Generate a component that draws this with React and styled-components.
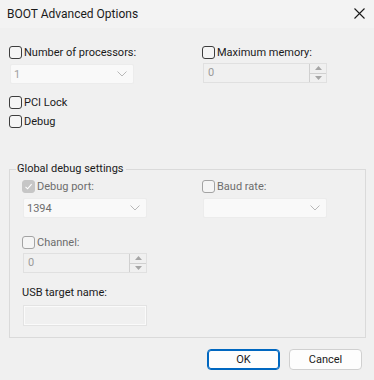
import React from 'react'
import styled, { createGlobalStyle } from 'styled-components'

const GlobalStyle = createGlobalStyle`
	html, body {
		margin: 0;
		padding: 0;
		background: #f0f0f0;
	}
	* {
		box-sizing: border-box;
	}
`

function Check({ label, checked, disabled, dim }) {
	return (
		<CheckRow>
			<CheckBox checked={checked} disabled={disabled}>
				{checked && (
					<svg width="9" height="9" viewBox="0 0 9 9">
						<path d="M1.5 4.8 L3.6 6.8 L7.6 2.2" fill="none" stroke="#fff" strokeWidth="1.1" />
					</svg>
				)}
			</CheckBox>
			<CheckLabel dim={dim}>{label}</CheckLabel>
		</CheckRow>
	)
}

function Combo({ value, dark }) {
	return (
		<ComboBox>
			<ComboValue dark={dark}>{value}</ComboValue>
			<svg width="10" height="6" viewBox="0 0 10 6">
				<path d="M0.5 0.5 L5 5 L9.5 0.5" fill="none" stroke="#b8b8b8" strokeWidth="1" />
			</svg>
		</ComboBox>
	)
}

function Spinner({ value }) {
	return (
		<SpinBox>
			<SpinValue>{value}</SpinValue>
			<SpinButtons>
				<SpinBtn>
					<svg width="7" height="4" viewBox="0 0 7 4">
						<path d="M0 4 L3.5 0 L7 4 Z" fill="#a6a6a6" />
					</svg>
				</SpinBtn>
				<SpinBtn>
					<svg width="7" height="4" viewBox="0 0 7 4">
						<path d="M0 0 L3.5 4 L7 0 Z" fill="#a6a6a6" />
					</svg>
				</SpinBtn>
			</SpinButtons>
		</SpinBox>
	)
}

export default function App() {
	return (
		<Dialog>
			<GlobalStyle />
			<TitleBar>
				<Title>BOOT Advanced Options</Title>
				<CloseBtn>
					<svg width="11" height="11" viewBox="0 0 11 11">
						<path d="M0.5 0.5 L10.5 10.5 M10.5 0.5 L0.5 10.5" stroke="#1a1a1a" strokeWidth="1.1" />
					</svg>
				</CloseBtn>
			</TitleBar>
			<Body>
				<TopGrid>
					<Column>
						<Check label="Number of processors:" />
						<Combo value="1" />
					</Column>
					<Column>
						<Check label="Maximum memory:" />
						<Spinner value="0" />
					</Column>
				</TopGrid>
				<Options>
					<Check label="PCI Lock" />
					<Check label="Debug" />
				</Options>
				<Group>
					<Legend>Global debug settings</Legend>
					<GroupGrid>
						<Column>
							<Check label="Debug port:" checked disabled dim />
							<Combo value="1394" dark />
						</Column>
						<Column>
							<Check label="Baud rate:" disabled dim />
							<Combo value="" />
						</Column>
						<Column>
							<Check label="Channel:" disabled dim />
							<Spinner value="0" />
						</Column>
					</GroupGrid>
					<UsbLabel>USB target name:</UsbLabel>
					<TextBox />
				</Group>
				<Buttons>
					<Button primary>OK</Button>
					<Button>Cancel</Button>
				</Buttons>
			</Body>
		</Dialog>
	)
}

const Dialog = styled.div`
	width: 374px;
	height: 380px;
	background: #f0f0f0;
	font-family: Roboto, 'Noto Sans', sans-serif;
	font-size: 11px;
	color: #1a1a1a;
	overflow: hidden;
`

const TitleBar = styled.div`
	height: 28px;
	background: #f3f3f3;
	display: flex;
	align-items: center;
	justify-content: space-between;
	padding: 0 9px 0 7px;
`

const Title = styled.div`
	font-size: 12px;
	color: #1a1a1a;
`

const CloseBtn = styled.div`
	width: 11px;
	height: 11px;
	display: flex;
	margin-top: -2px;
`

const Body = styled.div`
	padding: 16px 9px 0 9px;
`

const TopGrid = styled.div`
	display: grid;
	grid-template-columns: 193px 1fr;
`

const Column = styled.div`
	display: flex;
	flex-direction: column;
	gap: 4px;
`

const CheckRow = styled.label`
	display: flex;
	align-items: center;
	gap: 2px;
	height: 16px;
`

const CheckBox = styled.span`
	width: 13px;
	height: 13px;
	border-radius: 3px;
	border: 1px solid ${p => (p.checked ? '#c6c6c6' : p.disabled ? '#a3a3a3' : '#3d3d3d')};
	background: ${p => (p.checked ? '#c6c6c6' : '#f5f5f5')};
	display: flex;
	align-items: center;
	justify-content: center;
	flex-shrink: 0;
`

const CheckLabel = styled.span`
	color: ${p => (p.dim ? '#6d6d6d' : '#1a1a1a')};
	white-space: nowrap;
`

const ComboBox = styled.div`
	width: 124px;
	height: 20px;
	background: #f9f9f9;
	border: 1px solid #ececec;
	border-radius: 2px;
	display: flex;
	align-items: center;
	justify-content: space-between;
	padding: 0 6px 0 3px;
	margin-left: 1px;
`

const ComboValue = styled.span`
	color: ${p => (p.dark ? '#6d6d6d' : '#a0a0a0')};
`

const SpinBox = styled.div`
	width: 124px;
	height: 20px;
	border: 1px solid #e0e0e0;
	background: #f0f0f0;
	display: flex;
	margin-left: 1px;
	margin-top: -1px;
`

const SpinValue = styled.span`
	flex: 1;
	padding-left: 4px;
	color: #9a9a9a;
	line-height: 18px;
`

const SpinButtons = styled.div`
	width: 17px;
	display: flex;
	flex-direction: column;
	border-left: 1px solid #d0d0d0;
`

const SpinBtn = styled.div`
	flex: 1;
	display: flex;
	align-items: center;
	justify-content: center;
	background: #f0f0f0;
	& + & {
		border-top: 1px solid #d0d0d0;
	}
`

const Options = styled.div`
	display: flex;
	flex-direction: column;
	gap: 3px;
	margin-top: 10px;
`

const Group = styled.fieldset`
	margin: 32px 0 0 0;
	width: 357px;
	border: 1px solid #dadada;
	padding: 0 12px 11px 12px;
	min-width: 0;
`

const Legend = styled.legend`
	padding: 0 2px 0 1px;
	margin-left: -6px;
	color: #1a1a1a;
	line-height: 16px;
`

const GroupGrid = styled.div`
	display: grid;
	grid-template-columns: 180px 1fr;
	row-gap: 16px;
	margin-top: 1px;
`

const UsbLabel = styled.div`
	margin-top: 12px;
	line-height: 16px;
	color: #1a1a1a;
`

const TextBox = styled.div`
	width: 124px;
	height: 21px;
	border: 1px solid #e3e3e3;
	box-shadow: inset 0 0 0 1px #fafafa;
	margin-top: 4px;
	margin-left: 1px;
`

const Buttons = styled.div`
	display: flex;
	justify-content: flex-end;
	gap: 9px;
	margin-top: 11px;
	padding-right: 3px;
`

const Button = styled.div`
	width: 73px;
	height: 21px;
	border-radius: 4px;
	background: #fdfdfd;
	border: ${p => (p.primary ? '1px solid #0067c0' : '1px solid #d0d0d0')};
	box-shadow: ${p => (p.primary ? 'inset 0 0 0 1px #0067c0' : 'none')};
	display: flex;
	align-items: center;
	justify-content: center;
	color: #1a1a1a;
`
